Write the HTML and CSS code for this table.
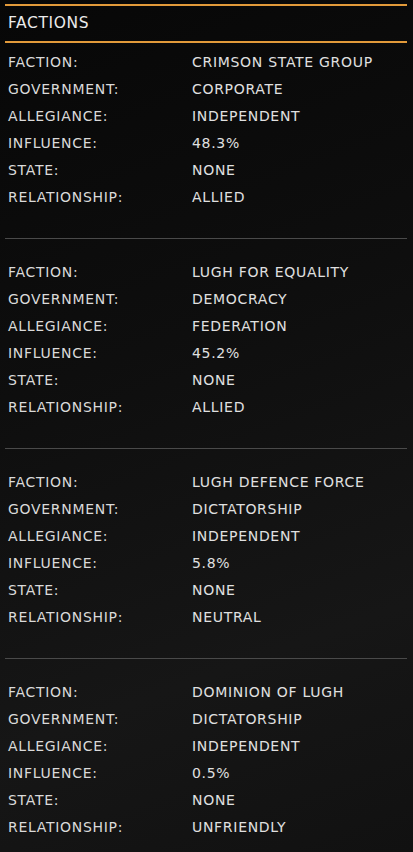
FILE: index.html
```html
<!DOCTYPE html>
<html>
<head>
<meta charset="utf-8">
<link rel="stylesheet" href="styles.css">
</head>
<body>
<div class="panel">
  <div class="header">FACTIONS</div>
  <div class="faction first">
    <div class="row"><span class="label">FACTION:</span><span class="value">CRIMSON STATE GROUP</span></div>
    <div class="row"><span class="label">GOVERNMENT:</span><span class="value">CORPORATE</span></div>
    <div class="row"><span class="label">ALLEGIANCE:</span><span class="value">INDEPENDENT</span></div>
    <div class="row"><span class="label">INFLUENCE:</span><span class="value">48.3%</span></div>
    <div class="row"><span class="label">STATE:</span><span class="value">NONE</span></div>
    <div class="row"><span class="label">RELATIONSHIP:</span><span class="value">ALLIED</span></div>
  </div>
  <div class="faction">
    <div class="row"><span class="label">FACTION:</span><span class="value">LUGH FOR EQUALITY</span></div>
    <div class="row"><span class="label">GOVERNMENT:</span><span class="value">DEMOCRACY</span></div>
    <div class="row"><span class="label">ALLEGIANCE:</span><span class="value">FEDERATION</span></div>
    <div class="row"><span class="label">INFLUENCE:</span><span class="value">45.2%</span></div>
    <div class="row"><span class="label">STATE:</span><span class="value">NONE</span></div>
    <div class="row"><span class="label">RELATIONSHIP:</span><span class="value">ALLIED</span></div>
  </div>
  <div class="faction">
    <div class="row"><span class="label">FACTION:</span><span class="value">LUGH DEFENCE FORCE</span></div>
    <div class="row"><span class="label">GOVERNMENT:</span><span class="value">DICTATORSHIP</span></div>
    <div class="row"><span class="label">ALLEGIANCE:</span><span class="value">INDEPENDENT</span></div>
    <div class="row"><span class="label">INFLUENCE:</span><span class="value">5.8%</span></div>
    <div class="row"><span class="label">STATE:</span><span class="value">NONE</span></div>
    <div class="row"><span class="label">RELATIONSHIP:</span><span class="value">NEUTRAL</span></div>
  </div>
  <div class="faction">
    <div class="row"><span class="label">FACTION:</span><span class="value">DOMINION OF LUGH</span></div>
    <div class="row"><span class="label">GOVERNMENT:</span><span class="value">DICTATORSHIP</span></div>
    <div class="row"><span class="label">ALLEGIANCE:</span><span class="value">INDEPENDENT</span></div>
    <div class="row"><span class="label">INFLUENCE:</span><span class="value">0.5%</span></div>
    <div class="row"><span class="label">STATE:</span><span class="value">NONE</span></div>
    <div class="row"><span class="label">RELATIONSHIP:</span><span class="value">UNFRIENDLY</span></div>
  </div>
</div>
</body>
</html>
```
FILE: styles.css
```css
html, body {
  margin: 0;
  padding: 0;
  height: 100%;
}
body {
  background: linear-gradient(160deg, #070707 0%, #0e0e0e 40%, #161616 75%, #111111 100%);
  color: #dedede;
  font-family: "DejaVu Sans", sans-serif;
  overflow: hidden;
}
.panel {
  padding-top: 4px;
}
.header {
  margin: 0 6px 0 5px;
  border-top: 2px solid #e29a3a;
  border-bottom: 2px solid #e29a3a;
  height: 35px;
  line-height: 35px;
  padding-left: 3px;
  font-size: 15.5px;
  color: #ebebeb;
  letter-spacing: 0.6px;
}
.faction {
  margin: 0 6px 0 5px;
  padding: 20px 0 27px 3px;
  border-bottom: 1px solid #4a4a4a;
}
.faction.first {
  padding-top: 5.5px;
}
.row {
  display: grid;
  grid-template-columns: 184px 1fr;
  height: 27px;
  line-height: 27px;
  font-size: 14px;
  letter-spacing: 0.7px;
}
.label {
  color: #dadada;
}
.value {
  color: #e0e0e0;
}
```
